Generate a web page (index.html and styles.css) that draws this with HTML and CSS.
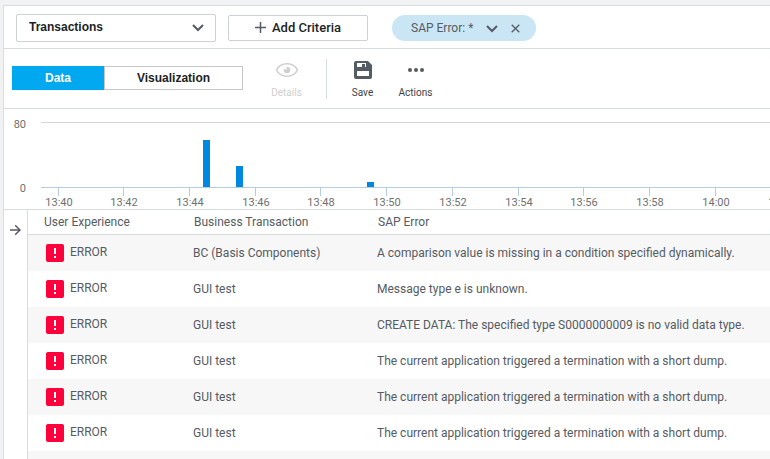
FILE: index.html
```html
<!DOCTYPE html>
<html lang="en">
  <head>
    <meta charset="UTF-8" />
    <meta name="viewport" content="width=device-width, initial-scale=1.0" />
    <title>Transactions</title>
    <link rel="stylesheet" href="styles.css">
  </head>
  <body>
    <svg class="sprite" width="0" height="0">
      <symbol id="icon-error" viewBox="0 0 18 18">
        <rect width="18" height="18" rx="2" fill="#ff003d" />
        <path d="M8 4h2v6H8zM8 12h2v2H8z" fill="#fff" />
      </symbol>
      <symbol id="icon-chevron" viewBox="0 0 12 8">
        <path d="M1 1l5 5 5-5" fill="none" stroke="#555b63" stroke-width="2" />
      </symbol>
    </svg>

    <main class="panel">
      <div class="criteria">
        <div class="source">
          <select class="source-select" aria-label="Source">
            <option>Transactions</option>
          </select>
          <svg class="source-arrow" width="12" height="8"><use href="#icon-chevron" /></svg>
        </div>
        <button class="add-button">
          <svg width="11" height="11" viewBox="0 0 11 11"><path d="M5.5 0v11M0 5.5h11" stroke="#555b63" stroke-width="1.5" /></svg>
          Add Criteria
        </button>
        <div class="chip">
          <span>SAP Error: *</span>
          <button class="chip-button" aria-label="Edit criteria">
            <svg width="12" height="8"><use href="#icon-chevron" /></svg>
          </button>
          <button class="chip-button" aria-label="Remove criteria">
            <svg width="9" height="9" viewBox="0 0 9 9"><path d="M.7.700l7.600 7.600M8.300.7l-7.600 7.600" stroke="#555b63" stroke-width="1.300" /></svg>
          </button>
        </div>
      </div>

      <div class="toolbar">
        <div class="tabs">
          <button class="tab tab-active">Data</button>
          <button class="tab tab-wide">Visualization</button>
        </div>
        <button class="tool tool-details" disabled>
          <svg width="24" height="20" viewBox="0 0 24 20">
            <path d="M1.5 10C3.500 6 7.400 3.800 12 3.800S20.500 6 22.500 10C20.500 14 16.600 16.200 12 16.200S3.500 14 1.500 10z" fill="none" stroke="#cdcfd1" stroke-width="1.600" />
            <circle cx="12" cy="10" r="3.300" fill="#cdcfd1" />
            <circle cx="10.500" cy="8.300" r="1.300" fill="#fff" />
          </svg>
          Details
        </button>
        <div class="divider"></div>
        <button class="tool">
          <svg width="20" height="20" viewBox="0 0 20 20">
            <path fill-rule="evenodd" d="M3 1h12l4 4v12a2 2 0 0 1-2 2H3a2 2 0 0 1-2-2V3a2 2 0 0 1 2-2zM4 3v4h9V3zM4 11v5h12v-5z" fill="#555b63" />
            <path d="M9 4h3v3H9z" fill="#555b63" />
          </svg>
          Save
        </button>
        <button class="tool">
          <svg width="20" height="20" viewBox="0 0 20 20">
            <g fill="#555b63"><circle cx="4" cy="10" r="2" /><circle cx="10" cy="10" r="2" /><circle cx="16" cy="10" r="2" /></g>
          </svg>
          Actions
        </button>
      </div>

      <svg class="chart" role="img" aria-label="Errors over time">
        <g class="axis-text axis-y">
          <text x="22" y="19">80</text>
          <text x="22" y="83">0</text>
        </g>
        <rect class="grid-line" x="37" y="13" width="100%" height="1" />
        <rect class="axis-line" x="37" y="78" width="100%" height="1" />
        <g id="bars" class="bars"></g>
        <g id="ticks" class="axis-text"></g>
      </svg>

      <div class="results">
        <div class="rail">
          <button class="rail-button" aria-label="Expand">
            <svg width="11" height="12" viewBox="0 0 11 12"><path d="M0 6h10M5.200 1.200L10 6l-4.800 4.800" fill="none" stroke="#555b63" stroke-width="1.500" /></svg>
          </button>
        </div>
        <table class="table">
          <thead>
            <tr><th class="col-status">User Experience</th><th class="col-name">Business Transaction</th><th>SAP Error</th></tr>
          </thead>
          <tbody>
            <tr>
              <td><div class="status"><svg width="18" height="18"><use href="#icon-error" /></svg><span>ERROR</span></div></td>
              <td>BC (Basis Components)</td>
              <td>A comparison value is missing in a condition specified dynamically.</td>
            </tr>
            <tr>
              <td><div class="status"><svg width="18" height="18"><use href="#icon-error" /></svg><span>ERROR</span></div></td>
              <td>GUI test</td>
              <td>Message type e is unknown.</td>
            </tr>
            <tr>
              <td><div class="status"><svg width="18" height="18"><use href="#icon-error" /></svg><span>ERROR</span></div></td>
              <td>GUI test</td>
              <td>CREATE DATA: The specified type S0000000009 is no valid data type.</td>
            </tr>
            <tr>
              <td><div class="status"><svg width="18" height="18"><use href="#icon-error" /></svg><span>ERROR</span></div></td>
              <td>GUI test</td>
              <td>The current application triggered a termination with a short dump.</td>
            </tr>
            <tr>
              <td><div class="status"><svg width="18" height="18"><use href="#icon-error" /></svg><span>ERROR</span></div></td>
              <td>GUI test</td>
              <td>The current application triggered a termination with a short dump.</td>
            </tr>
            <tr>
              <td><div class="status"><svg width="18" height="18"><use href="#icon-error" /></svg><span>ERROR</span></div></td>
              <td>GUI test</td>
              <td>The current application triggered a termination with a short dump.</td>
            </tr>
            <tr><td></td><td></td><td></td></tr>
          </tbody>
        </table>
      </div>
    </main>

    <script src="chart.js"></script>
  </body>
</html>
```

FILE: styles.css
```css
* {
  box-sizing: border-box;
}
body {
  margin: 0;
  height: 100vh;
  overflow: hidden;
  padding: 5px 0 0 3px;
  background-color: #f1f2f4;
  color: #555b63;
  font-family: Roboto, sans-serif;
  font-size: 12px;
  line-height: 16px;
}
button,
select {
  font-family: inherit;
  cursor: pointer;
}
svg {
  display: block;
}
.sprite {
  position: absolute;
}
.panel {
  min-height: 100%;
  background-color: #fff;
  border: 1px solid #d9dcdf;
  border-right: none;
  border-bottom: none;
}
.criteria {
  display: flex;
  align-items: center;
  height: 43px;
  padding: 1px 12px 0;
  gap: 12px;
  border-bottom: 1px solid #d9dcdf;
}
.source {
  position: relative;
  width: 200px;
}
.source-select {
  appearance: none;
  display: block;
  width: 100%;
  height: 28px;
  padding: 0 12px 2px;
  border: 1px solid #cdd2d7;
  border-radius: 2px;
  background-color: #fff;
  color: #1c1f24;
  font-family: "Liberation Sans", Arial, sans-serif;
  font-size: 12px;
  font-weight: bold;
}
.source-arrow {
  position: absolute;
  right: 12px;
  top: 10px;
  pointer-events: none;
}
.add-button {
  display: flex;
  align-items: center;
  justify-content: center;
  gap: 6px;
  width: 140px;
  height: 26px;
  padding: 0;
  border: 1px solid #cdd2d7;
  border-radius: 2px;
  background-color: #fff;
  color: #1c1f24;
  font-size: 13px;
  font-weight: 500;
}
.chip {
  display: flex;
  align-items: center;
  height: 26px;
  margin-left: 12px;
  padding: 0 16px 0 19px;
  gap: 13px;
  border-radius: 13px;
  background-color: #cae6f5;
}
.chip-button {
  padding: 2px 0 0;
  border: none;
  background: none;
}
.toolbar {
  display: flex;
  align-items: center;
  height: 60px;
  padding-left: 8px;
  border-bottom: 1px solid #d9dcdf;
}
.tabs {
  display: flex;
  padding-bottom: 2px;
}
.tab {
  width: 92px;
  height: 24px;
  padding: 0;
  border: 1px solid #c4c6c8;
  background-color: #fff;
  color: #1c1f24;
  font-family: "Liberation Sans", Arial, sans-serif;
  font-size: 12px;
  font-weight: bold;
}
.tab-wide {
  width: 139px;
}
.tab-active {
  background-color: #00a8ef;
  border-color: #00a8ef;
  color: #fff;
}
.tool {
  display: flex;
  flex-direction: column;
  align-items: center;
  gap: 6px;
  width: 53px;
  padding: 2px 0 0;
  border: none;
  background: none;
  color: #3d4248;
  font-size: 10px;
  line-height: 14px;
}
.tool:disabled {
  color: #cdcfd1;
}
.tool-details {
  margin-left: 17px;
}
.divider {
  width: 1px;
  height: 40px;
  margin: 0 9px 0 13px;
  background-color: #d9dcdf;
}
.chart {
  width: 100%;
  height: 101px;
  border-bottom: 1px solid #d9dcdf;
}
.axis-text {
  fill: #707070;
  font-size: 11px;
  text-anchor: middle;
}
.axis-y {
  text-anchor: end;
}
.grid-line {
  fill: #d3d6d8;
}
.axis-line,
.tick {
  fill: #b4cde0;
}
.bars {
  fill: #0088e0;
}
.results {
  display: flex;
}
.rail {
  width: 24px;
  border-right: 1px solid #d9dcdf;
}
.rail-button {
  padding: 14px 0 0 6px;
  border: none;
  background: none;
}
.table {
  flex: 1;
  border-spacing: 0;
}
.table th {
  height: 25px;
  padding: 0 0 0 16px;
  border-bottom: 1px solid #d5dedd;
  font-weight: normal;
  text-align: left;
}
.table td {
  height: 36px;
  padding: 0 0 0 15px;
}
.table .col-status {
  width: 150px;
}
.table .col-name {
  width: 184px;
}
.table tbody tr:nth-child(odd) {
  background-color: #f7f7f7;
}
.status {
  display: flex;
  align-items: center;
  gap: 6px;
  padding-left: 3px;
}
.status span {
  padding-bottom: 2px;
}
```

FILE: chart.js
```javascript
const svgNS = "http://www.w3.org/2000/svg";
const ticks = [
  { x: 54, label: "13:40" },
  { x: 119, label: "13:42" },
  { x: 185, label: "13:44" },
  { x: 251, label: "13:46" },
  { x: 316, label: "13:48" },
  { x: 382, label: "13:50" },
  { x: 448, label: "13:52" },
  { x: 514, label: "13:54" },
  { x: 579, label: "13:56" },
  { x: 645, label: "13:58" },
  { x: 711, label: "14:00" },
  { x: 777, label: "14:02" },
];
const bars = [
  { x: 199, height: 47 },
  { x: 232, height: 21 },
  { x: 363, height: 5 },
];
const baseline = 78;

function addShape(parent, name, attributes) {
  const shape = document.createElementNS(svgNS, name);
  for (const key in attributes) {
    shape.setAttribute(key, attributes[key]);
  }
  parent.appendChild(shape);
  return shape;
}

const barGroup = document.getElementById("bars");
bars.forEach((bar) => {
  addShape(barGroup, "rect", { x: bar.x, y: baseline - bar.height, width: 7, height: bar.height });
});

const tickGroup = document.getElementById("ticks");
ticks.forEach((tick) => {
  addShape(tickGroup, "rect", { class: "tick", x: tick.x, y: baseline, width: 1, height: 9 });
  addShape(tickGroup, "text", { x: tick.x + 1, y: 97 }).textContent = tick.label;
});
```
